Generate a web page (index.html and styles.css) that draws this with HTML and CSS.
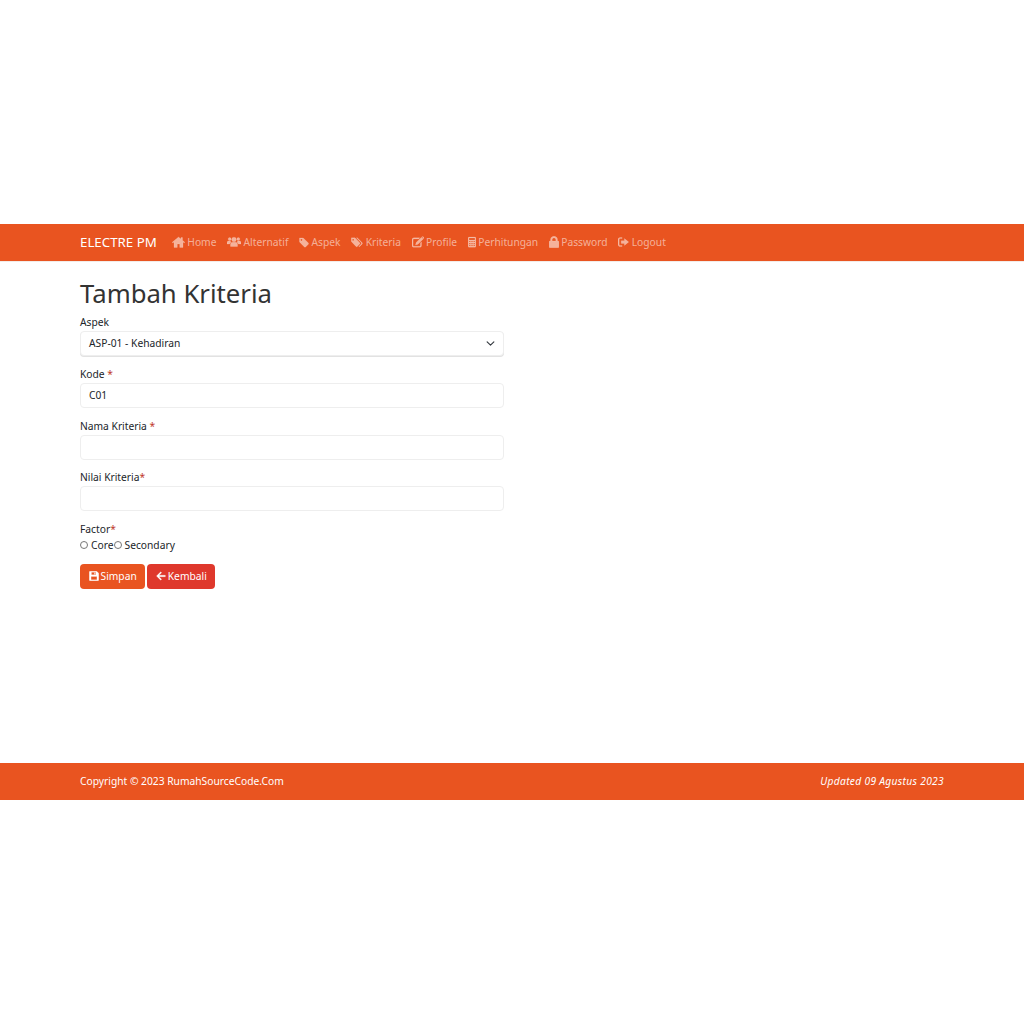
FILE: index.html
```html
<!DOCTYPE html>
<html lang="id">
<head>
<meta charset="utf-8">
<title>Tambah Kriteria</title>
<link rel="stylesheet" href="styles.css">
</head>
<body>
<svg class="defs" aria-hidden="true">
  <symbol id="i-home" viewBox="0 0 13 12"><path d="M6.500 1 .2 6.300l.6.7L2 6v5.400h3.300V8h2.400v3.400H11V6l1.200 1 .6-.7-2.300-2V1.500H9v1.500z"/></symbol>
  <symbol id="i-users" viewBox="0 0 14 12"><circle cx="7" cy="3.500" r="2.300"/><circle cx="2.700" cy="3" r="1.500"/><circle cx="11.300" cy="3" r="1.500"/><path d="M3.500 10.500V8.500c0-1.500 1-2.300 2-2.300h3c1 0 2 .8 2 2.300v2zM0 8V6.500c0-1 .7-1.500 1.500-1.500h1.800c.2.600.5 1 .8 1.300-.8.400-1.400 1-1.500 1.700zM14 8V6.500c0-1-.7-1.500-1.500-1.500h-1.800c-.2.600-.5 1-.8 1.300.8.400 1.400 1 1.500 1.700z"/></symbol>
  <symbol id="i-tag" viewBox="0 0 11 12"><path fill-rule="evenodd" d="M.5 1.500h4.200l5.600 5.600c.4.400.4 1 0 1.400l-3 3c-.4.400-1 .4-1.400 0L.5 5.900zM2.700 2.700a1 1 0 1 0 .01 0z"/></symbol>
  <symbol id="i-tags" viewBox="0 0 13 12"><path fill-rule="evenodd" d="M.3 1.500h4l5.200 5.200c.4.400.4 1 0 1.400l-2.700 2.700c-.4.400-1 .4-1.400 0L.3 5.500zM2.300 2.700a.9.9 0 1 0 .01 0z"/><path d="M5.800 1.500h1.100l5.300 5.200c.4.400.4 1 0 1.400l-2.700 2.700c-.4.400-.8.300-1.100 0l2.500-2.600c.5-.5.500-1.100 0-1.600z"/></symbol>
  <symbol id="i-edit" viewBox="0 0 13 12"><path d="M2 1.500h6.500L7.300 2.700H2c-.4 0-.8.300-.8.800v6.300c0 .4.400.8.800.8h6.300c.4 0 .8-.4.800-.8V7l1.200-1.200V10c0 1-.9 1.800-1.800 1.800H2C1 11.800 0 11 0 10V3.300C0 2.300 1 1.500 2 1.500z"/><path d="M10.300.8 12.200 2.700 6.500 8.500 3.800 9.200 4.500 6.500zM10.900.3l.5-.3c.3 0 .5.100.7.300l.9.900c.3.300.3.700 0 1l-.3.400z"/></symbol>
  <symbol id="i-calc" viewBox="0 0 9 12"><path fill-rule="evenodd" d="M1 .5h7c.5 0 .9.400.9.900v9.700c0 .5-.4.900-.9.900H1c-.5 0-.9-.4-.9-.9V1.400C.1.900.5.500 1 .5zM1.200 1.500v2.300h6.600V1.500zM1.200 4.800v1.300h1.700V4.800zM3.700 4.800v1.300h1.600V4.800zM6.100 4.800v1.300h1.700V4.800zM1.200 7v1.300h1.700V7zM3.700 7v1.300h1.600V7zM6.100 7v1.300h1.700V7zM1.200 9.200v1.300h1.700V9.200zM3.700 9.200v1.300h1.600V9.200zM6.100 9.200v1.300h1.700V9.200z"/></symbol>
  <symbol id="i-lock" viewBox="0 0 10 12"><path fill-rule="evenodd" d="M1.500 5V3.700C1.500 1.700 3 .3 5 .3s3.500 1.400 3.500 3.400V5h.4c.6 0 1 .4 1 1v4.800c0 .6-.4 1-1 1H1.100c-.6 0-1-.4-1-1V6c0-.6.4-1 1-1zM3.200 5h3.600V3.700C6.800 2.700 6 2 5 2s-1.800.7-1.800 1.700z"/></symbol>
  <symbol id="i-out" viewBox="0 0 12 12"><path d="M4.500 2.300H2.300c-.6 0-1 .4-1 1v5.400c0 .6.400 1 1 1h2.200V11H2.300C1 11 0 10 0 8.700V3.300C0 2 1 1 2.300 1h2.200z"/><path d="M7 2.300 11.700 6 7 9.700V7.500H3.500v-3H7z"/></symbol>
  <symbol id="i-save" viewBox="0 0 11 11"><path fill-rule="evenodd" d="M1 .3h7.500L10.700 2.500V10c0 .4-.3.700-.7.700H1c-.4 0-.7-.3-.7-.7V1c0-.4.300-.7.700-.7zM2.700 1.300v2.900h5V1.300zM2.300 6v3.700h6.400V6zM6 1.800h1v1.900H6z"/></symbol>
  <symbol id="i-left" viewBox="0 0 11 11"><path d="M5.200.9 6.200 1.900 3.300 4.700H10.300V6.300H3.300L6.200 9.100 5.200 10.100.5 5.500z"/></symbol>
</svg>
<div class="page">
  <nav class="navbar">
    <div class="container nav-inner">
      <a class="brand" href="#">ELECTRE PM</a>
      <ul class="menu">
        <li><a href="#"><svg class="ico w13"><use href="#i-home"/></svg>Home</a></li>
        <li><a href="#"><svg class="ico w14"><use href="#i-users"/></svg>Alternatif</a></li>
        <li><a href="#"><svg class="ico w10"><use href="#i-tag"/></svg>Aspek</a></li>
        <li><a href="#"><svg class="ico w12"><use href="#i-tags"/></svg>Kriteria</a></li>
        <li><a href="#"><svg class="ico w12"><use href="#i-edit"/></svg>Profile</a></li>
        <li><a href="#"><svg class="ico w8"><use href="#i-calc"/></svg>Perhitungan</a></li>
        <li><a href="#"><svg class="ico w10"><use href="#i-lock"/></svg>Password</a></li>
        <li><a href="#"><svg class="ico w11"><use href="#i-out"/></svg>Logout</a></li>
      </ul>
    </div>
  </nav>
  <main class="container main">
    <h1 class="title">Tambah Kriteria</h1>
    <form class="form">
      <div class="group">
        <label class="label">Aspek</label>
        <div class="control select">ASP-01 - Kehadiran
          <svg class="chev" viewBox="0 0 16 16"><path d="M2 5l6 6 6-6" fill="none" stroke="#343a40" stroke-width="2" stroke-linecap="round" stroke-linejoin="round"/></svg>
        </div>
      </div>
      <div class="group">
        <label class="label">Kode <span class="req">*</span></label>
        <input class="control" type="text" value="C01">
      </div>
      <div class="group">
        <label class="label">Nama Kriteria <span class="req">*</span></label>
        <input class="control" type="text">
      </div>
      <div class="group">
        <label class="label">Nilai Kriteria<span class="req">*</span></label>
        <input class="control" type="text">
      </div>
      <div class="group">
        <label class="label">Factor<span class="req">*</span></label>
        <div class="radios">
          <label class="radio"><span class="dot"></span>Core</label>
          <label class="radio"><span class="dot"></span>Secondary</label>
        </div>
      </div>
      <div class="actions">
        <button class="btn primary" type="button"><svg class="ico w9"><use href="#i-save"/></svg>Simpan</button>
        <button class="btn danger" type="button"><svg class="ico w9"><use href="#i-left"/></svg>Kembali</button>
      </div>
    </form>
  </main>
  <footer class="footer">
    <div class="container foot-inner">
      <span>Copyright © 2023 RumahSourceCode.Com</span>
      <em class="updated">Updated 09 Agustus 2023</em>
    </div>
  </footer>
</div>
</body>
</html>
```
FILE: styles.css
```css
* { box-sizing: border-box; }
html, body { margin: 0; padding: 0; }
body {
  min-height: 100vh;
  display: flex;
  flex-direction: column;
  justify-content: center;
  background: #fff;
  color: #212529;
  font-family: "Noto Sans", "Open Sans", sans-serif;
  font-size: 10.25px;
  line-height: 16px;
}
.defs { display: none; }
.page { height: 576px; display: flex; flex-direction: column; }
.container { width: 864px; margin: 0 auto; }
.navbar { height: 37px; background: #e95420; flex: none; box-shadow: 0 1px 0 #f3ece8; }
.nav-inner { height: 35px; display: flex; align-items: center; padding-top: 1px; }
.brand { color: #fff; text-decoration: none; font-size: 13.3px; margin-right: 15px; }
.menu { list-style: none; display: flex; margin: 0; padding: 0; gap: 10.6px; font-size: 10.25px; }
.menu a { color: rgba(255,255,255,.55); text-decoration: none; display: flex; align-items: center; gap: 2.5px; }
.ico { fill: currentColor; stroke: currentColor; stroke-width: .25px; height: 12px; flex: none; }
.w8 { width: 8px; } .w9 { width: 10px; height: 10px; } .w10 { width: 10px; } .w11 { width: 11px; }
.w12 { width: 12px; } .w13 { width: 13px; } .w14 { width: 14px; }
.main { flex: 1; padding-top: 16px; }
.title { margin: 0 0 4px; font-size: 25.7px; font-weight: 400; line-height: 33px; color: #333; }
.form { width: 424px; }
.group { margin-bottom: 9.75px; }
.label { display: block; height: 17px; line-height: 16px; }
.req { color: #c0392b; }
.control {
  display: block; width: 100%; height: 25px; padding: 0 8px;
  border: 1px solid #eee; border-radius: 4px; background: #fff;
  font: inherit; color: #212529; line-height: 23px;
}
.select { position: relative; border-color: #eee; box-shadow: 0 1px 0 #e2e2e2; }
.chev { position: absolute; right: 8px; top: 7px; width: 9px; height: 9px; }
.radios { display: flex; margin-top: -1px; }
.radio { display: flex; align-items: center; }
.dot { width: 8px; height: 8px; border: 1px solid #777; border-radius: 50%; margin: -1px 3px 0 0; background: #fff; }
.actions { display: flex; gap: 2px; padding-top: 1px; }
.btn {
  display: flex; align-items: center; gap: 2px; height: 25px; padding: 0 8.5px;
  border: 0; border-radius: 4px; color: #fff; font: inherit;
}
.primary { background: #e95420; }
.danger { background: #df382c; }
.footer { height: 37px; background: #e95420; color: #fff; flex: none; }
.foot-inner { height: 35px; display: flex; align-items: center; justify-content: space-between; }
.updated { letter-spacing: .3px; }
```
